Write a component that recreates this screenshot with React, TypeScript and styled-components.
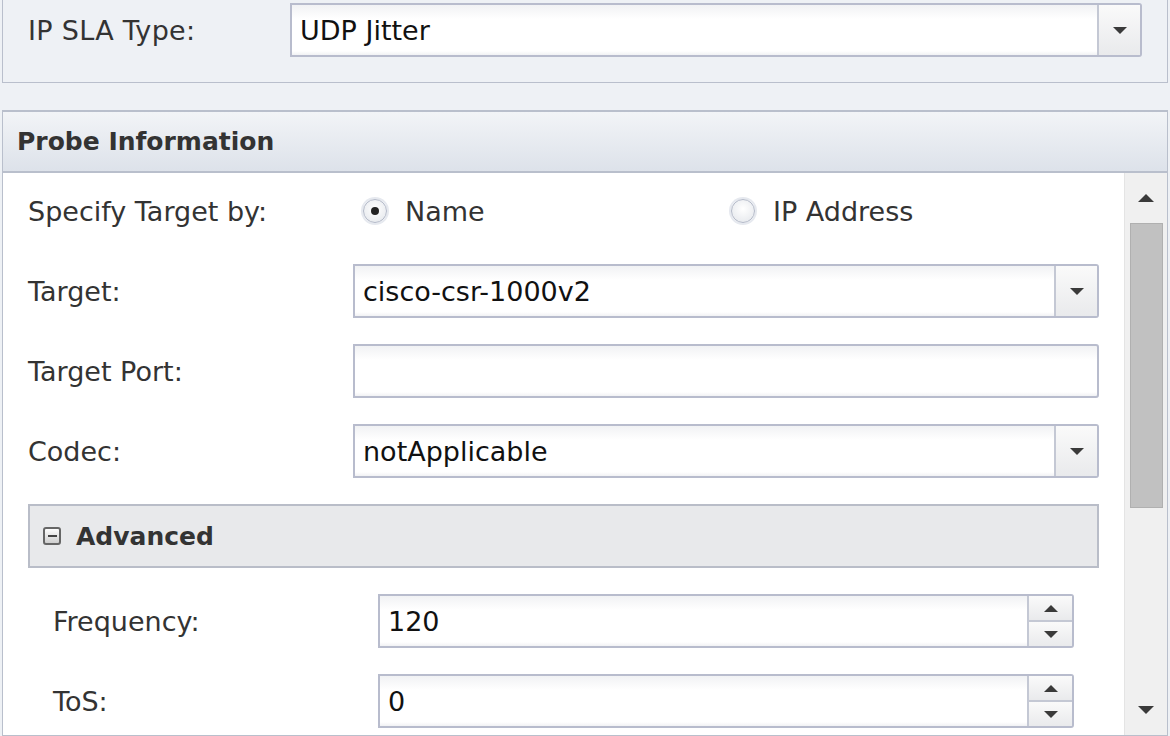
import React from "react";
import styled, { createGlobalStyle } from "styled-components";

const GlobalStyle = createGlobalStyle`
    html, body {
        margin: 0;
        padding: 0;
        background: #eef1f5;
        font-family: "DejaVu Sans", "Noto Sans", sans-serif;
        color: #333;
    }
`;

const Page = styled.div`
    width: 1170px;
    height: 736px;
    overflow: hidden;
    padding: 0 2px;
    box-sizing: border-box;
    display: flex;
    flex-direction: column;
`;

const TypePanel = styled.div`
    border: 1px solid #b9bfcc;
    border-top: none;
    height: 83px;
    box-sizing: border-box;
    padding: 3px 25px 0 25px;
    display: flex;
    align-items: flex-start;
`;

const TypeLabel = styled.div`
    width: 262px;
    height: 54px;
    display: flex;
    align-items: center;
    font-size: 27px;
    letter-spacing: 0.3px;
`;

const ProbePanel = styled.div`
    margin-top: 27px;
    border: 1px solid #b9bfcc;
    border-top-width: 2px;
    flex: 1;
    display: flex;
    flex-direction: column;
    min-height: 0;
`;

const PanelHeader = styled.div`
    height: 61px;
    box-sizing: border-box;
    border-bottom: 2px solid #b9bfcc;
    background: linear-gradient(#f2f4f7, #dde2ea);
    display: flex;
    align-items: center;
    padding-left: 14px;
    font-size: 25px;
    font-weight: bold;
`;

const PanelBody = styled.div`
    flex: 1;
    display: flex;
    background: #fff;
    min-height: 0;
`;

const Form = styled.div`
    flex: 1;
    padding: 11px 25px 0 25px;
    display: flex;
    flex-direction: column;
    gap: 26px;
`;

const Row = styled.div<{ $indent?: boolean }>`
    display: grid;
    grid-template-columns: 325px 1fr;
    height: 54px;
    align-items: center;
    ${p => p.$indent && "padding: 0 25px;"}
`;

const Label = styled.div`
    font-size: 27px;
    color: #333;
`;

const RadioGroup = styled.div`
    display: grid;
    grid-template-columns: 1fr 1fr;
    padding-left: 10px;
`;

const RadioOption = styled.div`
    display: flex;
    align-items: center;
    gap: 18px;
    font-size: 27px;
    color: #333;
`;

const RadioCircle = styled.span<{ $checked?: boolean }>`
    width: 24px;
    height: 24px;
    border-radius: 50%;
    border: 1px solid #b3b9c8;
    background: radial-gradient(circle at 50% 40%, #ffffff, #e2e5ea);
    box-shadow: 0 0 0 2px #e6e9ef;
    box-sizing: border-box;
    display: flex;
    align-items: center;
    justify-content: center;
    &::after {
        content: "";
        width: 8px;
        height: 8px;
        border-radius: 50%;
        background: ${p => (p.$checked ? "#222" : "transparent")};
    }
`;

const Field = styled.div`
    height: 54px;
    box-sizing: border-box;
    border: 2px solid #b8bccd;
    border-radius: 0 3px 3px 0;
    display: flex;
    background: linear-gradient(#f1f2f4, #ffffff 14px, #ffffff 46px, #f1f2f4);
    flex: 1;
`;

const FieldText = styled.div`
    flex: 1;
    display: flex;
    align-items: center;
    padding-left: 8px;
    font-size: 27px;
    color: #111;
`;

const DropButton = styled.div`
    width: 41px;
    border-left: 2px solid #c4c8d4;
    background: linear-gradient(#fafafa, #e9eaec);
    display: flex;
    align-items: center;
    justify-content: center;
`;

const SpinBox = styled.div`
    width: 43px;
    border-left: 2px solid #c4c8d4;
    display: flex;
    flex-direction: column;
`;

const SpinButton = styled.div<{ $top?: boolean }>`
    flex: 1;
    display: flex;
    align-items: center;
    justify-content: center;
    background: linear-gradient(#fafafa, #e9eaec);
    ${p => p.$top && "border-bottom: 2px solid #c4c8d4;"}
`;

const Arrow = styled.span<{ $up?: boolean; $size?: number }>`
    width: 0;
    height: 0;
    border-left: ${p => p.$size ?? 7}px solid transparent;
    border-right: ${p => p.$size ?? 7}px solid transparent;
    ${p => (p.$up ? "border-bottom" : "border-top")}: ${p => p.$size ?? 7}px solid #3a3a3a;
`;

const Section = styled.div`
    display: flex;
    flex-direction: column;
    gap: 26px;
`;

const SectionHeader = styled.div`
    height: 64px;
    box-sizing: border-box;
    border: 2px solid #b9bdc8;
    background: #e8e9eb;
    display: flex;
    align-items: center;
    padding-left: 13px;
    gap: 15px;
    font-size: 25px;
    font-weight: bold;
    color: #333;
`;

const CollapseIcon = styled.span`
    width: 18px;
    height: 18px;
    box-sizing: border-box;
    border: 2px solid #666;
    border-radius: 3px;
    background: linear-gradient(#fdfdfd, #cfcfcf);
    display: flex;
    align-items: center;
    justify-content: center;
    &::after {
        content: "";
        width: 9px;
        height: 2px;
        background: #444;
    }
`;

const Scrollbar = styled.div`
    width: 42px;
    background: #f0f0f0;
    border-left: 1px solid #e4e4e4;
    display: flex;
    flex-direction: column;
    align-items: center;
`;

const ScrollArrow = styled.div`
    height: 50px;
    width: 100%;
    display: flex;
    align-items: center;
    justify-content: center;
`;

const Thumb = styled.div`
    width: 33px;
    height: 285px;
    box-sizing: border-box;
    background: #c1c1c1;
    border: 1px solid #b0b0b0;
`;

const Track = styled.div`
    flex: 1;
`;

const Select = ({ value }: { value: string }) => (
    <Field>
        <FieldText>{value}</FieldText>
        <DropButton>
            <Arrow $size={7} />
        </DropButton>
    </Field>
);

const Spinner = ({ value }: { value: string }) => (
    <Field>
        <FieldText>{value}</FieldText>
        <SpinBox>
            <SpinButton $top>
                <Arrow $up $size={7} />
            </SpinButton>
            <SpinButton>
                <Arrow $size={7} />
            </SpinButton>
        </SpinBox>
    </Field>
);

const App = () => (
    <>
        <GlobalStyle />
        <Page>
            <TypePanel>
                <TypeLabel>IP SLA Type:</TypeLabel>
                <Select value="UDP Jitter" />
            </TypePanel>
            <ProbePanel>
                <PanelHeader>Probe Information</PanelHeader>
                <PanelBody>
                    <Form>
                        <Row>
                            <Label>Specify Target by:</Label>
                            <RadioGroup>
                                <RadioOption>
                                    <RadioCircle $checked />
                                    Name
                                </RadioOption>
                                <RadioOption>
                                    <RadioCircle />
                                    IP Address
                                </RadioOption>
                            </RadioGroup>
                        </Row>
                        <Row>
                            <Label>Target:</Label>
                            <Select value="cisco-csr-1000v2" />
                        </Row>
                        <Row>
                            <Label>Target Port:</Label>
                            <Field>
                                <FieldText />
                            </Field>
                        </Row>
                        <Row>
                            <Label>Codec:</Label>
                            <Select value="notApplicable" />
                        </Row>
                        <Section>
                            <SectionHeader>
                                <CollapseIcon />
                                Advanced
                            </SectionHeader>
                            <Row $indent>
                                <Label>Frequency:</Label>
                                <Spinner value="120" />
                            </Row>
                            <Row $indent>
                                <Label>ToS:</Label>
                                <Spinner value="0" />
                            </Row>
                        </Section>
                    </Form>
                    <Scrollbar>
                        <ScrollArrow>
                            <Arrow $up $size={8} />
                        </ScrollArrow>
                        <Thumb />
                        <Track />
                        <ScrollArrow>
                            <Arrow $size={8} />
                        </ScrollArrow>
                    </Scrollbar>
                </PanelBody>
            </ProbePanel>
        </Page>
    </>
);

export default App;
